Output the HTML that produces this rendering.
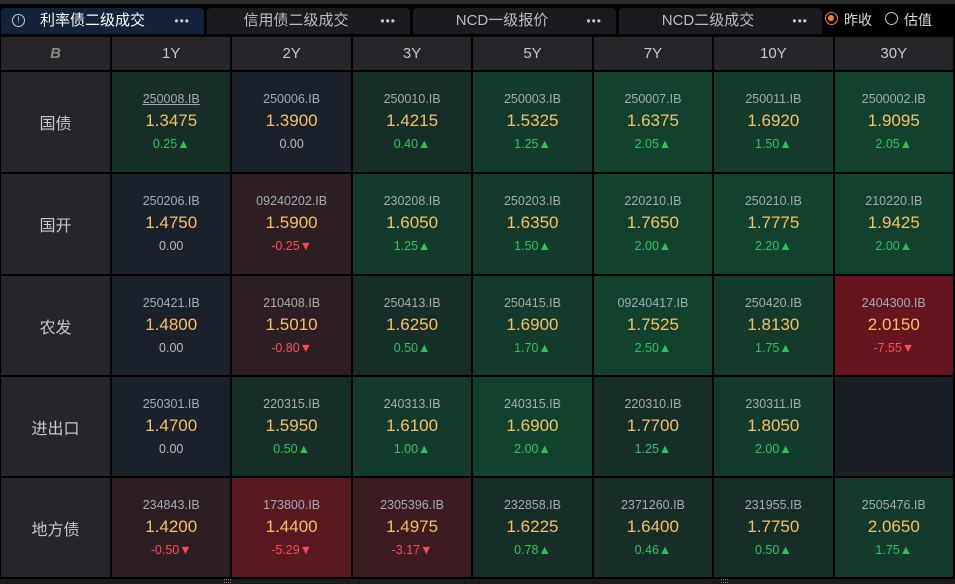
<!DOCTYPE html>
<html><head><meta charset="utf-8">
<style>
*{box-sizing:border-box;margin:0;padding:0}
body{width:955px;height:584px;background:#000;font-family:"Liberation Sans","Noto Sans CJK SC",sans-serif;overflow:hidden;position:relative}
.top{position:absolute;left:0;top:0;width:955px;height:4px;background:#2b2c2f}
.tab{position:absolute;top:8px;height:26px;background:#1a1b1e;border-radius:4px 4px 0 0;color:#b8bcc2;font-size:15px;line-height:26px}
.tab .t{position:absolute;left:0;right:40px;text-align:center}
.tab .d{position:absolute;right:14px;top:0;font-size:12px;letter-spacing:1px;color:#c8ccd2}
.tab.a{background:#12223a;color:#fff}
.grid{position:absolute;left:1px;top:37px;width:952px;display:grid;grid-template-columns:109px repeat(7,1fr);grid-template-rows:33px 100px 100px 99px 99px 99px;gap:2px}
.h{background:#25262a;color:#c4c8ce;font-size:15px;display:flex;align-items:center;justify-content:center}
.r{background:#25262a;color:#c4c8ce;font-size:16px;display:flex;align-items:center;justify-content:center}
.c{display:flex;flex-direction:column;align-items:center;justify-content:center;text-align:center}
.c .i{font-size:12.5px;color:#a3abb6;height:18px;line-height:18px}
.c .v{font-size:17px;color:#f5c067;height:26px;line-height:26px}
.c .g{font-size:12.5px;height:20px;line-height:20px}
.up{color:#2fc25b}.dn{color:#ff4d4f}.z{color:#b8bcc2}
.k0{background:#1b212a}.g1{background:#172e28}.g2{background:#143a2c}.g3{background:#12422e}
.n1{background:#2d1e24}.n2{background:#3c1b21}.n3{background:#581920}.n4{background:#66151e}
.e{background:#1a1f26}
.bot{position:absolute;left:0;top:579px;width:955px;height:5px;background:#1b1b1b}
.hd{position:absolute;top:579px;width:7px;height:4px;border-top:1px dotted #888;border-bottom:1px dotted #888}
.rad{position:absolute;top:12px;width:13px;height:13px;border-radius:50%;border:1.5px solid #c8ccd2}
.rl{position:absolute;top:10px;font-size:14px;color:#d8dce0}
</style></head><body>
<div class="top"></div>
<div class="tab a" style="left:1px;width:203px"><span style="position:absolute;left:11px;top:6px;width:13px;height:13px;border:1.3px solid #c8ccd2;border-radius:50%;font-size:9px;line-height:11px;text-align:center;color:#c8ccd2">!</span><span class="t" style="left:20px">利率债二级成交</span><span class="d">•••</span></div>
<div class="tab" style="left:207px;width:203px"><span class="t" style="left:15px">信用债二级成交</span><span class="d">•••</span></div>
<div class="tab" style="left:413px;width:203px"><span class="t" style="left:15px">NCD一级报价</span><span class="d">•••</span></div>
<div class="tab" style="left:619px;width:203px"><span class="t" style="left:15px">NCD二级成交</span><span class="d">•••</span></div>
<div class="rad" style="left:825px;border-color:#f08a30"><div style="position:absolute;left:2px;top:2px;width:6px;height:6px;border-radius:50%;background:#f08a30"></div></div>
<div class="rl" style="left:844px">昨收</div>
<div class="rad" style="left:885px"></div>
<div class="rl" style="left:904px">估值</div>
<div class="grid">
<div class="h" style="color:#888;font-weight:bold;font-style:italic">B</div><div class="h">1Y</div><div class="h">2Y</div><div class="h">3Y</div><div class="h">5Y</div><div class="h">7Y</div><div class="h">10Y</div><div class="h">30Y</div>

<div class="r">国债</div>
<div class="c g1"><div class="i" style="text-decoration:underline">250008.IB</div><div class="v">1.3475</div><div class="g up">0.25▲</div></div>
<div class="c k0"><div class="i">250006.IB</div><div class="v">1.3900</div><div class="g z">0.00</div></div>
<div class="c g1"><div class="i">250010.IB</div><div class="v">1.4215</div><div class="g up">0.40▲</div></div>
<div class="c g2"><div class="i">250003.IB</div><div class="v">1.5325</div><div class="g up">1.25▲</div></div>
<div class="c g3"><div class="i">250007.IB</div><div class="v">1.6375</div><div class="g up">2.05▲</div></div>
<div class="c g2"><div class="i">250011.IB</div><div class="v">1.6920</div><div class="g up">1.50▲</div></div>
<div class="c g3"><div class="i">2500002.IB</div><div class="v">1.9095</div><div class="g up">2.05▲</div></div>

<div class="r">国开</div>
<div class="c k0"><div class="i">250206.IB</div><div class="v">1.4750</div><div class="g z">0.00</div></div>
<div class="c n1"><div class="i">09240202.IB</div><div class="v">1.5900</div><div class="g dn">-0.25▼</div></div>
<div class="c g2"><div class="i">230208.IB</div><div class="v">1.6050</div><div class="g up">1.25▲</div></div>
<div class="c g2"><div class="i">250203.IB</div><div class="v">1.6350</div><div class="g up">1.50▲</div></div>
<div class="c g3"><div class="i">220210.IB</div><div class="v">1.7650</div><div class="g up">2.00▲</div></div>
<div class="c g3"><div class="i">250210.IB</div><div class="v">1.7775</div><div class="g up">2.20▲</div></div>
<div class="c g3"><div class="i">210220.IB</div><div class="v">1.9425</div><div class="g up">2.00▲</div></div>

<div class="r">农发</div>
<div class="c k0"><div class="i">250421.IB</div><div class="v">1.4800</div><div class="g z">0.00</div></div>
<div class="c n1"><div class="i">210408.IB</div><div class="v">1.5010</div><div class="g dn">-0.80▼</div></div>
<div class="c g1"><div class="i">250413.IB</div><div class="v">1.6250</div><div class="g up">0.50▲</div></div>
<div class="c g2"><div class="i">250415.IB</div><div class="v">1.6900</div><div class="g up">1.70▲</div></div>
<div class="c g3"><div class="i">09240417.IB</div><div class="v">1.7525</div><div class="g up">2.50▲</div></div>
<div class="c g2"><div class="i">250420.IB</div><div class="v">1.8130</div><div class="g up">1.75▲</div></div>
<div class="c n4"><div class="i">2404300.IB</div><div class="v">2.0150</div><div class="g dn">-7.55▼</div></div>

<div class="r">进出口</div>
<div class="c k0"><div class="i">250301.IB</div><div class="v">1.4700</div><div class="g z">0.00</div></div>
<div class="c g1"><div class="i">220315.IB</div><div class="v">1.5950</div><div class="g up">0.50▲</div></div>
<div class="c g2"><div class="i">240313.IB</div><div class="v">1.6100</div><div class="g up">1.00▲</div></div>
<div class="c g3"><div class="i">240315.IB</div><div class="v">1.6900</div><div class="g up">2.00▲</div></div>
<div class="c g1"><div class="i">220310.IB</div><div class="v">1.7700</div><div class="g up">1.25▲</div></div>
<div class="c g2"><div class="i">230311.IB</div><div class="v">1.8050</div><div class="g up">2.00▲</div></div>
<div class="e"></div>

<div class="r">地方债</div>
<div class="c n1"><div class="i">234843.IB</div><div class="v">1.4200</div><div class="g dn">-0.50▼</div></div>
<div class="c n3"><div class="i">173800.IB</div><div class="v">1.4400</div><div class="g dn">-5.29▼</div></div>
<div class="c n2"><div class="i">2305396.IB</div><div class="v">1.4975</div><div class="g dn">-3.17▼</div></div>
<div class="c g1"><div class="i">232858.IB</div><div class="v">1.6225</div><div class="g up">0.78▲</div></div>
<div class="c g1"><div class="i">2371260.IB</div><div class="v">1.6400</div><div class="g up">0.46▲</div></div>
<div class="c g1"><div class="i">231955.IB</div><div class="v">1.7750</div><div class="g up">0.50▲</div></div>
<div class="c g2"><div class="i">2505476.IB</div><div class="v">2.0650</div><div class="g up">1.75▲</div></div>
</div>
<div class="bot"></div>
<div class="hd" style="left:224px"></div>
<div class="hd" style="left:721px"></div>
</body></html>
